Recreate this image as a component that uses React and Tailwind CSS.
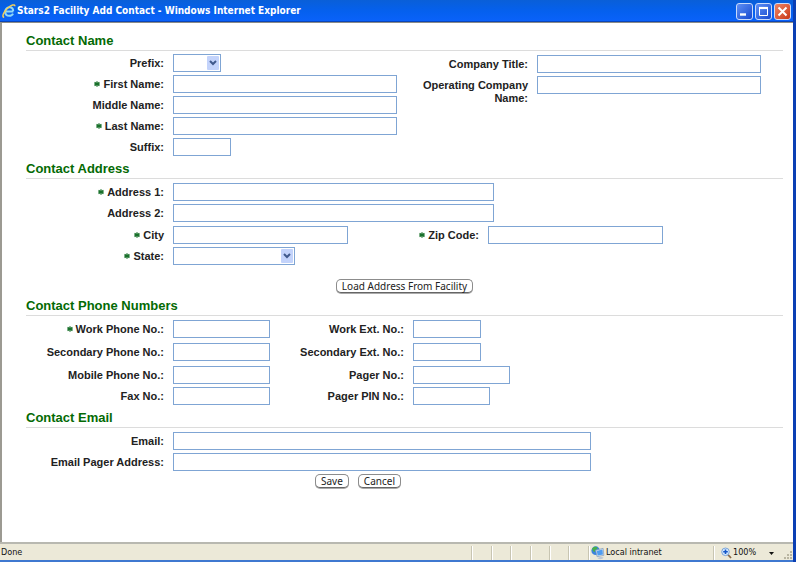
import React from 'react';

function RequiredMark() {
  return (
    <svg className="mr-[3px] inline-block align-[1px]" width="6" height="6" viewBox="0 0 6 6" role="img" aria-label="required">
      <path d="M3 0.3V5.7M0.6 1.3L5.4 4.7M5.4 1.3L0.6 4.7M0 3H6" stroke="#18702a" strokeWidth="1.2" />
    </svg>
  );
}

function Section({ title, children }) {
  return (
    <section>
      <h2 className="border-b border-[#dcdcdc] text-[13px] leading-[18px] font-bold text-[#046a04]">{title}</h2>
      {children}
    </section>
  );
}

function Label({ id, required, width = 'w-[138px]', children }) {
  return (
    <label htmlFor={id} className={`${width} shrink-0 pt-[3px] text-right text-[11px] leading-[13px] font-bold text-[#222]`}>
      {required && <RequiredMark />}
      {children}
    </label>
  );
}

function TextField({ id, label, required, labelWidth, width }) {
  return (
    <div className="flex h-[18px] gap-[9px]">
      <Label id={id} required={required} width={labelWidth}>{label}</Label>
      <input id={id} type="text" className={`${width} h-[18px] border border-[#7fa5d4] bg-white px-1 text-[11px] outline-none`} />
    </div>
  );
}

function SelectField({ id, label, required, width }) {
  return (
    <div className="flex h-[18px] gap-[9px]">
      <Label id={id} required={required}>{label}</Label>
      <div className={`relative ${width}`}>
        <select id={id} className="block h-[18px] w-full appearance-none border border-[#7fa5d4] bg-white px-1 text-[11px] outline-none">
          <option></option>
        </select>
        <span className="pointer-events-none absolute top-[2px] right-[2px] flex h-[14px] w-[12px] items-center justify-center rounded-[1px] bg-[#c3d3fb]">
          <svg width="8" height="6" viewBox="0 0 8 6">
            <path d="M1 1L4 4L7 1" fill="none" stroke="#40598c" strokeWidth="2" />
          </svg>
        </span>
      </div>
    </div>
  );
}

function PillButton({ children }) {
  return (
    <button
      type="button"
      className="h-[14px] rounded-[5px] border border-[#8c8c8c] border-b-[#666] bg-white px-[5px] font-['Noto_Sans',sans-serif] text-[10px] leading-[12px] text-[#222] shadow-[0_1px_0_#aaa]"
    >
      {children}
    </button>
  );
}

function BrowserLogo() {
  return (
    <svg width="14" height="16" viewBox="0 0 14 16" aria-hidden="true">
      <path d="M11.3 8.4H4.2M11.2 8.3C11.2 5.6 9.6 4.3 7.4 4.3C4.9 4.3 3.2 6.2 3.2 8.7C3.2 11.2 4.9 12.8 7.2 12.8C9 12.8 10.4 12 11 10.6" fill="none" stroke="#8ed8f8" strokeWidth="2" />
      <path d="M2.2 14.3C-0.6 14 1.6 8.8 5.6 5.2C9.2 1.9 12.8 0.8 12.9 3.2" fill="none" stroke="#f2cf5b" strokeWidth="1.5" />
    </svg>
  );
}

function WindowButton({ label, color, children }) {
  return (
    <button type="button" aria-label={label} className={`flex size-[17px] items-center justify-center rounded-[3px] border border-[#c9dafb] ${color}`}>
      <svg width="15" height="15" viewBox="0 0 15 15">{children}</svg>
    </button>
  );
}

function TitleBar() {
  return (
    <header className="flex h-[22px] shrink-0 items-center bg-linear-to-b from-[#0a5fd8] via-[#0560ee] to-[#0a62fb] pr-[2px] pl-[2px] shadow-[inset_0_-1px_0_#0a45b8]">
      <BrowserLogo />
      <h1 className="ml-[1px] grow font-['DejaVu_Sans_Condensed','DejaVu_Sans',sans-serif] text-[10px] leading-[16px] font-bold whitespace-nowrap text-white">
        Stars2 Facility Add Contact - Windows Internet Explorer
      </h1>
      <div className="flex gap-[2px]">
        <WindowButton label="Minimize" color="bg-linear-to-br from-[#5f8ff5] to-[#1747cf]">
          <path d="M3 10.5H9" stroke="#fff" strokeWidth="2.4" />
        </WindowButton>
        <WindowButton label="Maximize" color="bg-linear-to-br from-[#5f8ff5] to-[#1747cf]">
          <path d="M3.5 4V11.5H11.5V4" fill="none" stroke="#fff" strokeWidth="1" />
          <path d="M3 4H12" stroke="#fff" strokeWidth="2.2" />
        </WindowButton>
        <WindowButton label="Close" color="bg-linear-to-br from-[#ee8464] to-[#c8340f]">
          <path d="M3.5 3.5L11.5 11.5M11.5 3.5L3.5 11.5" stroke="#fff" strokeWidth="2" />
        </WindowButton>
      </div>
    </header>
  );
}

function NetworkIcon() {
  return (
    <svg width="14" height="14" viewBox="0 0 15 15" aria-hidden="true">
      <circle cx="5" cy="5" r="4.6" fill="#3c84dc" />
      <path d="M1.2 2.5C3 0.3 6.5 0.3 7 2.2C6.8 4.2 4 3.4 4.2 5.8C3.6 7.4 1.6 5.6 1.2 2.5Z" fill="#48b048" />
      <path d="M5 4.5L13 2.5L13.8 10L6.5 11.5Z" fill="#cfe0ee" stroke="#8097b4" strokeWidth="0.7" />
      <path d="M6.2 5.4L12.2 3.8L12.8 9L7.2 10.2Z" fill="#4f9cf0" />
      <path d="M7 13.2C8.5 11.6 12.5 11.2 13.5 12.4C12.8 14.2 8.4 14.7 7 13.2Z" fill="#bcc7d5" />
    </svg>
  );
}

function ZoomIcon() {
  return (
    <svg width="11" height="12" viewBox="0 0 11 12" aria-hidden="true">
      <path d="M6.8 7.5L10 11" stroke="#8a6a48" strokeWidth="1.8" />
      <circle cx="4.5" cy="4.8" r="3.8" fill="#d6eaff" stroke="#7ba4d8" />
      <path d="M4.5 2.5V7.1M2.2 4.8H6.8" stroke="#1557c8" strokeWidth="1.6" />
    </svg>
  );
}

function StatusBar() {
  const pane = 'h-[14px] border-l border-[#c8c5b2] shadow-[inset_1px_0_0_#fff]';
  return (
    <footer className="flex h-[20px] shrink-0 items-center border-t-2 border-b-2 border-t-[#b8b8b0] border-b-[#3f78d0] bg-[#ece9d8] pt-[2px] font-['DejaVu_Sans_Condensed','DejaVu_Sans',sans-serif] text-[9px] text-[#111]">
      <span className="grow pl-[1px]">Done</span>
      <span className={`${pane} w-[20px]`} />
      <span className={`${pane} w-[19px]`} />
      <span className={`${pane} w-[20px]`} />
      <span className={`${pane} w-[19px]`} />
      <span className={`${pane} w-[19px]`} />
      <span className={`${pane} w-[20px]`} />
      <span className={`${pane} flex w-[125px] items-center gap-[1px] pl-[2px] whitespace-nowrap`}>
        <NetworkIcon />
        Local intranet
      </span>
      <button type="button" className={`${pane} flex w-[72px] items-center pl-[7px]`}>
        <ZoomIcon />
        <span className="ml-[1px] grow text-left">100%</span>
        <svg className="mr-[11px]" width="5" height="3" viewBox="0 0 5 3" aria-hidden="true">
          <path d="M0 0H5L2.5 3Z" fill="#111" />
        </svg>
      </button>
      <svg className="-ml-[2px] self-end" width="10" height="10" viewBox="0 0 10 10" aria-hidden="true">
        <path d="M7 1h2v2h-2zM7 4h2v2h-2zM4 4h2v2h-2zM7 7h2v2h-2zM4 7h2v2h-2zM1 7h2v2h-2z" fill="#b9b5a1" />
      </svg>
    </footer>
  );
}

export default function App() {
  return (
    <div className="flex min-h-screen flex-col border-r-[3px] border-[#0a3fb4] bg-white font-['Liberation_Sans',Arial,sans-serif]">
      <TitleBar />
      <main className="grow border-t border-l-2 border-t-[#8d8d88] border-l-[#9c9a92] pr-[10px] pb-4 pl-[24px]">
        <form className="flex flex-col gap-1 pt-[9px]">
          <Section title="Contact Name">
            <div className="flex pt-[3px]">
              <div className="flex flex-col gap-[3px]">
                <SelectField id="prefix" label="Prefix:" width="w-[48px]" />
                <TextField id="first" label="First Name:" required width="w-[224px]" />
                <TextField id="middle" label="Middle Name:" width="w-[224px]" />
                <TextField id="last" label="Last Name:" required width="w-[224px]" />
                <TextField id="suffix" label="Suffix:" width="w-[58px]" />
              </div>
              <div className="flex flex-col gap-[3px] pt-[1px]">
                <TextField id="title" label="Company Title:" labelWidth="w-[131px]" width="w-[224px]" />
                <TextField id="company" label="Operating Company Name:" labelWidth="w-[131px]" width="w-[224px]" />
              </div>
            </div>
          </Section>

          <Section title="Contact Address">
            <div className="flex flex-col gap-[3px] pt-1">
              <TextField id="address1" label="Address 1:" required width="w-[321px]" />
              <TextField id="address2" label="Address 2:" width="w-[321px]" />
              <div className="flex pt-[1px]">
                <TextField id="city" label="City" required width="w-[175px]" />
                <TextField id="zip" label="Zip Code:" required labelWidth="w-[131px]" width="w-[175px]" />
              </div>
              <SelectField id="state" label="State:" required width="w-[122px]" />
            </div>
            <div className="flex justify-center pt-[14px]">
              <PillButton>Load Address From Facility</PillButton>
            </div>
          </Section>

          <Section title="Contact Phone Numbers">
            <div className="flex flex-col gap-[5px] pt-1">
              <div className="flex">
                <TextField id="work" label="Work Phone No.:" required width="w-[97px]" />
                <TextField id="workExt" label="Work Ext. No.:" labelWidth="w-[134px]" width="w-[68px]" />
              </div>
              <div className="flex">
                <TextField id="secondary" label="Secondary Phone No.:" width="w-[97px]" />
                <TextField id="secondaryExt" label="Secondary Ext. No.:" labelWidth="w-[134px]" width="w-[68px]" />
              </div>
              <div className="flex flex-col gap-[3px]">
                <div className="flex">
                  <TextField id="mobile" label="Mobile Phone No.:" width="w-[97px]" />
                  <TextField id="pager" label="Pager No.:" labelWidth="w-[134px]" width="w-[97px]" />
                </div>
                <div className="flex">
                  <TextField id="fax" label="Fax No.:" width="w-[97px]" />
                  <TextField id="pin" label="Pager PIN No.:" labelWidth="w-[134px]" width="w-[77px]" />
                </div>
              </div>
            </div>
          </Section>

          <Section title="Contact Email">
            <div className="flex flex-col gap-[3px] pt-1">
              <TextField id="email" label="Email:" width="w-[418px]" />
              <TextField id="emailPager" label="Email Pager Address:" width="w-[418px]" />
              <div className="flex gap-[9px] pl-[289px]">
                <PillButton>Save</PillButton>
                <PillButton>Cancel</PillButton>
              </div>
            </div>
          </Section>
        </form>
      </main>
      <StatusBar />
    </div>
  );
}
